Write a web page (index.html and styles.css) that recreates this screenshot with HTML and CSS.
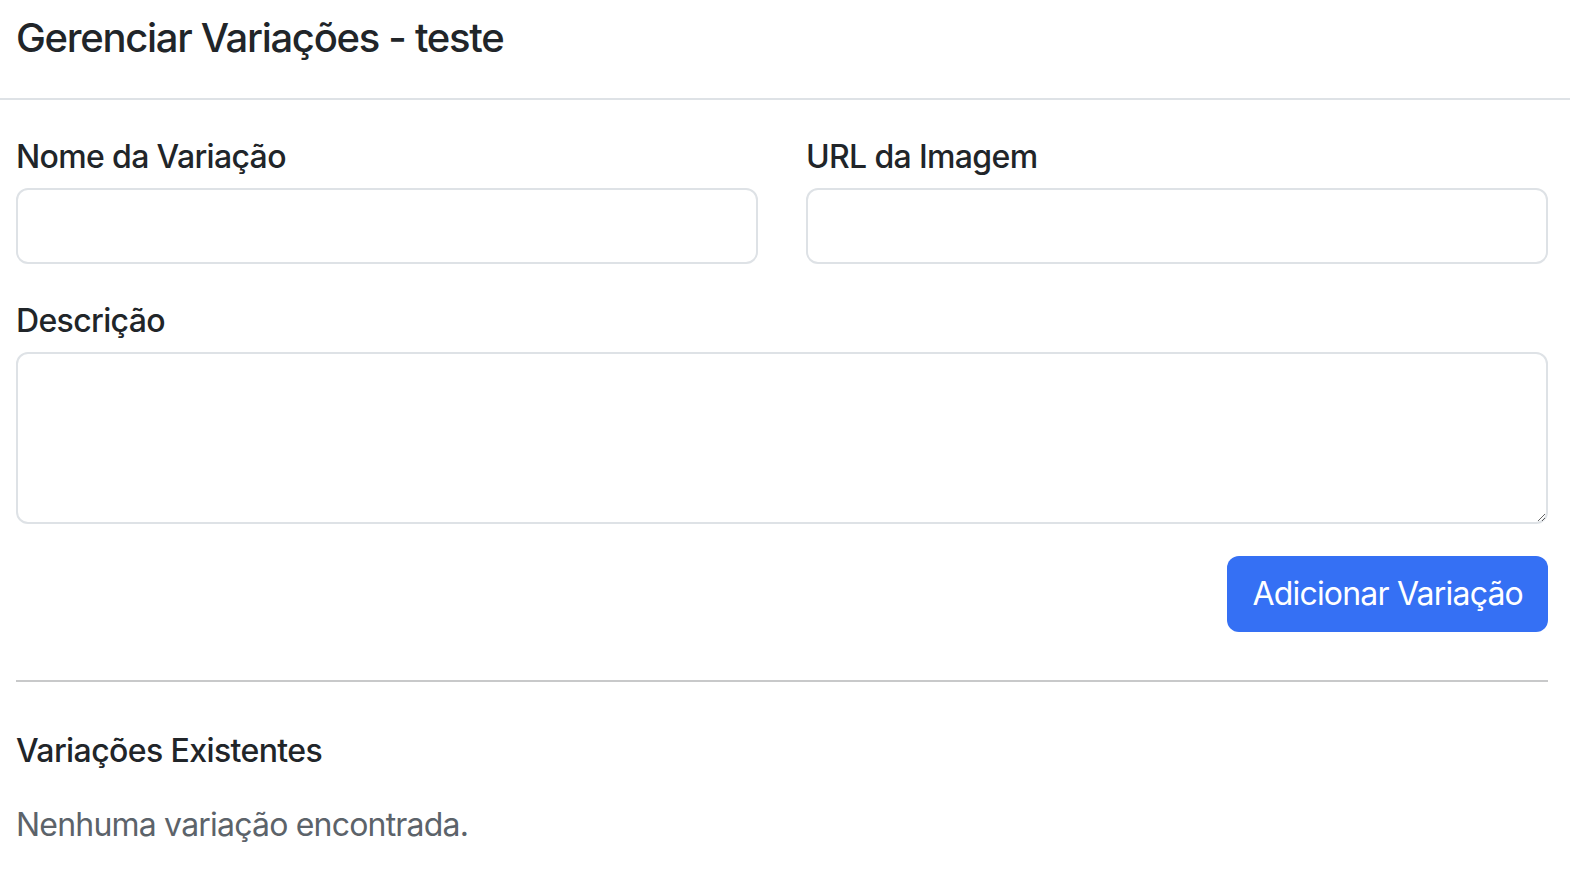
FILE: index.html
```html
<!DOCTYPE html>
<html lang="pt-BR">
<head>
<meta charset="utf-8">
<title>Gerenciar Variações - teste</title>
<link rel="stylesheet" href="styles.css">
</head>
<body>
<div class="modal">
  <div class="modal-header">
    <h5 class="modal-title">Gerenciar Variações - teste</h5>
  </div>
  <div class="modal-body">
    <form class="form">
      <div class="row">
        <div class="field">
          <label class="label" for="nome">Nome da Variação</label>
          <input class="control" id="nome" type="text">
        </div>
        <div class="field">
          <label class="label" for="url">URL da Imagem</label>
          <input class="control" id="url" type="text">
        </div>
      </div>
      <div class="field full">
        <label class="label" for="desc">Descrição</label>
        <textarea class="control textarea" id="desc" rows="3"></textarea>
      </div>
      <div class="actions">
        <button type="button" class="btn">Adicionar Variação</button>
      </div>
    </form>
    <hr class="divider">
    <h6 class="section-title">Variações Existentes</h6>
    <p class="muted">Nenhuma variação encontrada.</p>
  </div>
</div>
</body>
</html>
```

FILE: styles.css
```css
* { box-sizing: border-box; }
html, body { margin: 0; padding: 0; background: #fff; }
body {
  font-family: Inter, "Noto Sans", "Liberation Sans", sans-serif;
  color: #212529;
  font-size: 32px;
  line-height: 1.5;
  letter-spacing: -0.8px;
}
.modal { width: 100%; }
.modal-header {
  padding: 14px 16px 36px;
  border-bottom: 2px solid #dee2e6;
}
.modal-title {
  margin: 0;
  font-size: 40px;
  line-height: 48px;
  font-weight: 500;
  letter-spacing: -1.3px;
}
.modal-body { padding: 33px 22px 0 16px; }
.form { display: flex; flex-direction: column; }
.row {
  display: grid;
  grid-template-columns: 1fr 1fr;
  column-gap: 48px;
  margin-bottom: 33px;
}
.field { display: flex; flex-direction: column; }
.label {
  font-weight: 500;
  margin-bottom: 7px;
  line-height: 48px;
  letter-spacing: -0.65px;
}
.control {
  height: 76px;
  border: 2px solid #dee2e6;
  border-radius: 12px;
  padding: 12px 24px;
  font: inherit;
  color: inherit;
  background: #fff;
  outline: none;
}
.textarea { height: 172px; resize: vertical; }
.actions {
  display: flex;
  justify-content: flex-end;
  margin-top: 32px;
}
.btn {
  height: 76px;
  padding: 0 25px;
  background: #3570f4;
  color: #fff;
  border: 0;
  border-radius: 12px;
  font: inherit;
  letter-spacing: -0.8px;
  cursor: pointer;
}
.divider {
  margin: 48px 0 50px;
  border: 0;
  border-top: 2px solid #c8c9ca;
}
.section-title {
  margin: 0 0 31px;
  font-size: 32px;
  line-height: 38px;
  font-weight: 500;
  letter-spacing: -0.6px;
}
.muted {
  margin: 0;
  color: #5c636a;
}
```
